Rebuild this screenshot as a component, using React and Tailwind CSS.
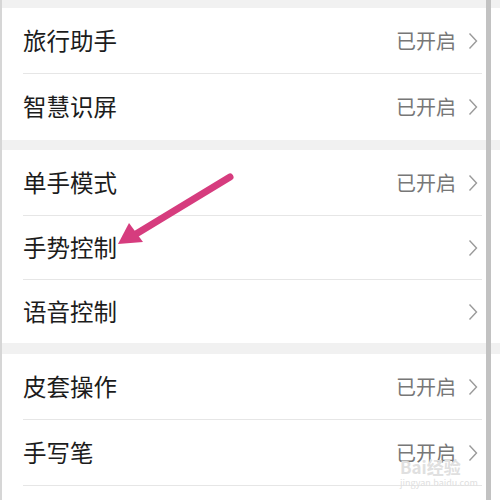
const sections = [
  [
    { label: "旅行助手", status: "已开启", h: "h-[66px]" },
    { label: "智慧识屏", status: "已开启", h: "h-[66px]" },
  ],
  [
    { label: "单手模式", status: "已开启", h: "h-[66px]" },
    { label: "手势控制", status: "", h: "h-[64px]" },
    { label: "语音控制", status: "", h: "h-[63px]" },
  ],
  [
    { label: "皮套操作", status: "已开启", h: "h-[66px]" },
    { label: "手写笔", status: "已开启", h: "h-[66px]" },
    { label: "", status: "", h: "h-[66px]" },
  ],
];

function Chevron() {
  return (
    <svg width="10" height="18" viewBox="0 0 10 18" className="shrink-0">
      <path d="M1.5 1.5 L8.5 9 L1.5 16.5" fill="none" stroke="#9a9a9a" strokeWidth="1.4" />
    </svg>
  );
}

function Row({ row, last }) {
  return (
    <div className="pl-[21px] pr-[18px]">
      <div className={`${row.h} flex items-center ${last ? "" : "border-b border-[#e6e6e6]"}`}>
        <span className="flex-1 text-[23.5px] text-[#1c1c1c]">{row.label}</span>
        {row.status && <span className="mr-[12px] text-[20px] text-[#777]">{row.status}</span>}
        {row.label && <Chevron />}
        {row.label && <div className="w-[4px]" />}
      </div>
    </div>
  );
}

export default function App() {
  return (
    <div
      className="relative h-[500px] w-[500px] overflow-hidden border-l-2 border-[#d6d6d6] bg-white"
      style={{ fontFamily: '"Noto Sans CJK SC", "Noto Sans", sans-serif' }}
    >
      <div className="h-2 bg-[#f1f1f1]" />
      {sections.map((rows, i) => (
        <div key={i}>
          {i > 0 && <div className={i === 1 ? "h-[10px] bg-[#f1f1f1]" : "h-[11px] bg-[#f1f1f1]"} />}
          <div className="bg-white">
            {rows.map((row, j) => (
              <Row key={j} row={row} last={j === rows.length - 1 && i < 2} />
            ))}
          </div>
        </div>
      ))}

      {/* scrollbar over the list */}
      <div className="absolute top-0 right-[9px] h-[500px] w-[5px] bg-[#c2c2c2]" />

      <svg className="absolute top-0 left-0" width="498" height="500" viewBox="0 0 498 500">
        <line x1="228" y1="177" x2="134" y2="234" stroke="#d63c7e" strokeWidth="7" strokeLinecap="round" />
        <polygon points="116,244 127,223 141,242" fill="#d63c7e" />
      </svg>

      <div className="absolute top-[458px] left-[398px] leading-none text-[#e0e0e0]">
        <div className="text-[17px] font-bold">Bai经验</div>
        <div className="mt-[3px] text-[9px]">jingyan.baidu.com</div>
      </div>
    </div>
  );
}
